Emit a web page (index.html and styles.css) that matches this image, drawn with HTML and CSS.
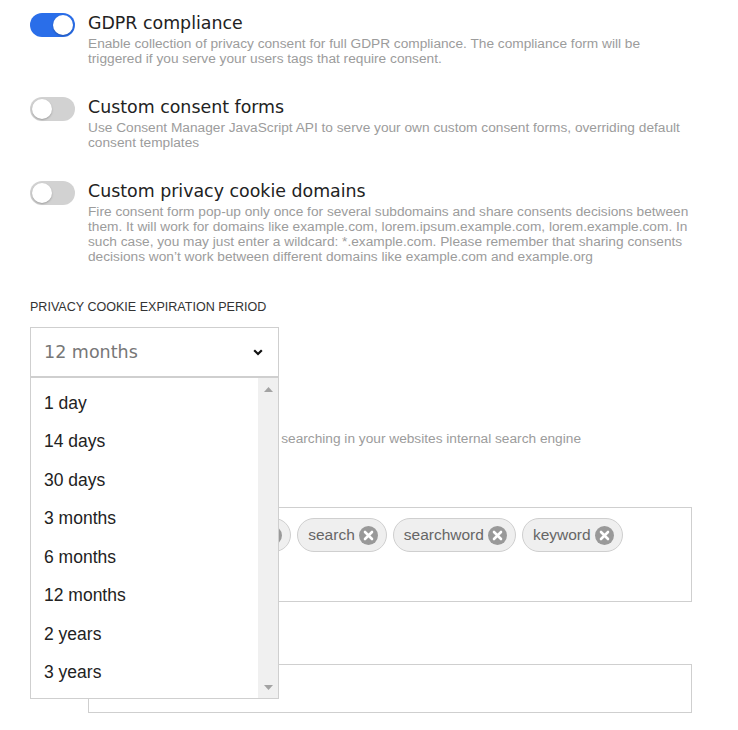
FILE: index.html
```html
<!DOCTYPE html>
<html lang="en">
<head>
<meta charset="utf-8">
<title>Privacy settings</title>
<link rel="stylesheet" href="styles.css">
</head>
<body>
<div class="page">
  <div class="setting">
    <span class="toggle on"><span class="knob"></span></span>
    <div class="setting-body">
      <div class="title">GDPR compliance</div>
      <p class="desc">Enable collection of privacy consent for full GDPR compliance. The compliance form will be triggered if you serve your users tags that require consent.</p>
    </div>
  </div>

  <div class="setting">
    <span class="toggle"><span class="knob"></span></span>
    <div class="setting-body">
      <div class="title">Custom consent forms</div>
      <p class="desc">Use Consent Manager JavaScript API to serve your own custom consent forms, overriding default consent templates</p>
    </div>
  </div>

  <div class="setting">
    <span class="toggle"><span class="knob"></span></span>
    <div class="setting-body">
      <div class="title">Custom privacy cookie domains</div>
      <p class="desc">Fire consent form pop-up only once for several subdomains and share consents decisions between them. It will work for domains like example.com, lorem.ipsum.example.com, lorem.example.com. In such case, you may just enter a wildcard: *.example.com. Please remember that sharing consents decisions won’t work between different domains like example.com and example.org</p>
    </div>
  </div>

  <div class="field">
    <div class="field-label">PRIVACY COOKIE EXPIRATION PERIOD</div>
    <div class="select-wrap">
      <div class="select">
        <span class="select-value">12 months</span>
        <svg class="chevron" width="10" height="7" viewBox="0 0 10 7"><path d="M1.2 1.2 L5 5 L8.8 1.2" fill="none" stroke="#111" stroke-width="2.2"/></svg>
      </div>
      <div class="dropdown">
        <ul class="options">
          <li>1 day</li>
          <li>14 days</li>
          <li>30 days</li>
          <li>3 months</li>
          <li>6 months</li>
          <li>12 months</li>
          <li>2 years</li>
          <li>3 years</li>
        </ul>
        <div class="scrollbar">
          <svg width="9" height="5" viewBox="0 0 9 5"><path d="M0 5 L4.5 0 L9 5 Z" fill="#a3a3a3"/></svg>
          <svg width="9" height="5" viewBox="0 0 9 5"><path d="M0 0 L4.5 5 L9 0 Z" fill="#a3a3a3"/></svg>
        </div>
      </div>
    </div>
  </div>

  <div class="setting search-setting">
    <span class="toggle on"><span class="knob"></span></span>
    <div class="setting-body">
      <div class="title">Site search tracking</div>
      <p class="desc">Keywords that your visitors use searching in your websites internal search engine</p>
      <div class="sub-label">KEYWORD PARAMETERS</div>
      <div class="tag-box">
        <span class="chip">queries<span class="chip-x"><svg width="19" height="19" viewBox="0 0 19 19"><path d="M6 6 L13 13 M13 6 L6 13" stroke="#fff" stroke-width="2.6" stroke-linecap="round"/></svg></span></span>
        <span class="chip">phrase<span class="chip-x"><svg width="19" height="19" viewBox="0 0 19 19"><path d="M6 6 L13 13 M13 6 L6 13" stroke="#fff" stroke-width="2.6" stroke-linecap="round"/></svg></span></span>
        <span class="chip">search<span class="chip-x"><svg width="19" height="19" viewBox="0 0 19 19"><path d="M6 6 L13 13 M13 6 L6 13" stroke="#fff" stroke-width="2.6" stroke-linecap="round"/></svg></span></span>
        <span class="chip">searchword<span class="chip-x"><svg width="19" height="19" viewBox="0 0 19 19"><path d="M6 6 L13 13 M13 6 L6 13" stroke="#fff" stroke-width="2.6" stroke-linecap="round"/></svg></span></span>
        <span class="chip">keyword<span class="chip-x"><svg width="19" height="19" viewBox="0 0 19 19"><path d="M6 6 L13 13 M13 6 L6 13" stroke="#fff" stroke-width="2.6" stroke-linecap="round"/></svg></span></span>
      </div>
      <div class="sub-label second">CATEGORY PARAMETERS</div>
      <div class="text-input"></div>
    </div>
  </div>
</div>
</body>
</html>
```

FILE: styles.css
```css
html, body {
  margin: 0;
  padding: 0;
  background: #fff;
}

body {
  font-family: "Liberation Sans", Arial, sans-serif;
  color: #222;
}

.page {
  padding: 12px 46px 0 30px;
}

.setting {
  display: flex;
  align-items: flex-start;
  gap: 13px;
  margin-bottom: 30px;
}

.toggle {
  flex: none;
  width: 45px;
  height: 24px;
  margin-top: 1px;
  border-radius: 12px;
  background: #d2d2d2;
  display: flex;
  align-items: center;
  padding: 0 2px;
  box-sizing: border-box;
}

.toggle .knob {
  width: 20px;
  height: 20px;
  border-radius: 50%;
  background: #fff;
  box-shadow: 0 1px 2px rgba(0, 0, 0, 0.25);
}

.toggle.on {
  background: #2a6ee9;
  justify-content: flex-end;
}

.setting-body {
  flex: 1;
  min-width: 0;
}

.title {
  font-family: "DejaVu Sans", Verdana, sans-serif;
  font-size: 17.4px;
  line-height: 22px;
  color: #222;
  margin-bottom: 2px;
}

.desc {
  margin: 0;
  font-size: 13.7px;
  line-height: 15px;
  color: #9c9c9c;
}

.field {
  margin-top: 36px;
}

.field-label {
  font-size: 12.55px;
  line-height: 15px;
  color: #333;
  margin-bottom: 12px;
}

.select-wrap {
  position: relative;
  width: 249px;
  z-index: 2;
}

.select {
  height: 50px;
  box-sizing: border-box;
  border: 1px solid #cfcfcf;
  display: flex;
  align-items: center;
  justify-content: space-between;
  padding: 0 15px 0 13px;
  background: #fff;
}

.select-value {
  font-family: "DejaVu Sans", Verdana, sans-serif;
  font-size: 17.5px;
  color: #777;
}

.chevron {
  display: block;
}

.dropdown {
  position: absolute;
  top: 100%;
  left: 0;
  width: 249px;
  height: 322px;
  box-sizing: border-box;
  border: 1px solid #cfcfcf;
  background: #fff;
  display: flex;
}

.options {
  list-style: none;
  margin: 0;
  padding: 6px 0;
  flex: 1;
}

.options li {
  height: 38.43px;
  line-height: 38.43px;
  padding-left: 13px;
  font-size: 17.5px;
  color: #222;
}

.scrollbar {
  flex: none;
  width: 20px;
  background: #f0f0f0;
  display: flex;
  flex-direction: column;
  justify-content: space-between;
  align-items: center;
  padding: 9px 0 8px;
  box-sizing: border-box;
}

.scrollbar svg {
  display: block;
}

.search-setting {
  margin-top: 30px;
  margin-bottom: 0;
}

.sub-label {
  font-size: 12.55px;
  line-height: 15px;
  color: #333;
  margin-top: 30px;
  margin-bottom: 16px;
}

.sub-label.second {
  margin-top: 31px;
}

.tag-box {
  height: 95px;
  box-sizing: border-box;
  border: 1px solid #cfcfcf;
  padding: 10px 9px 10px 12px;
  display: flex;
  flex-wrap: wrap;
  align-content: flex-start;
  gap: 6px;
}

.chip {
  display: inline-flex;
  align-items: center;
  height: 34px;
  box-sizing: border-box;
  border: 1px solid #cfcfcf;
  border-radius: 17px;
  background: #efefef;
  padding: 0 8px 0 10px;
  font-size: 15.5px;
  color: #666;
  gap: 4px;
}

.chip-x {
  width: 19px;
  height: 19px;
  border-radius: 50%;
  background: #999;
  display: flex;
}

.chip-x svg {
  display: block;
}

.text-input {
  height: 49px;
  box-sizing: border-box;
  border: 1px solid #cfcfcf;
}
```
